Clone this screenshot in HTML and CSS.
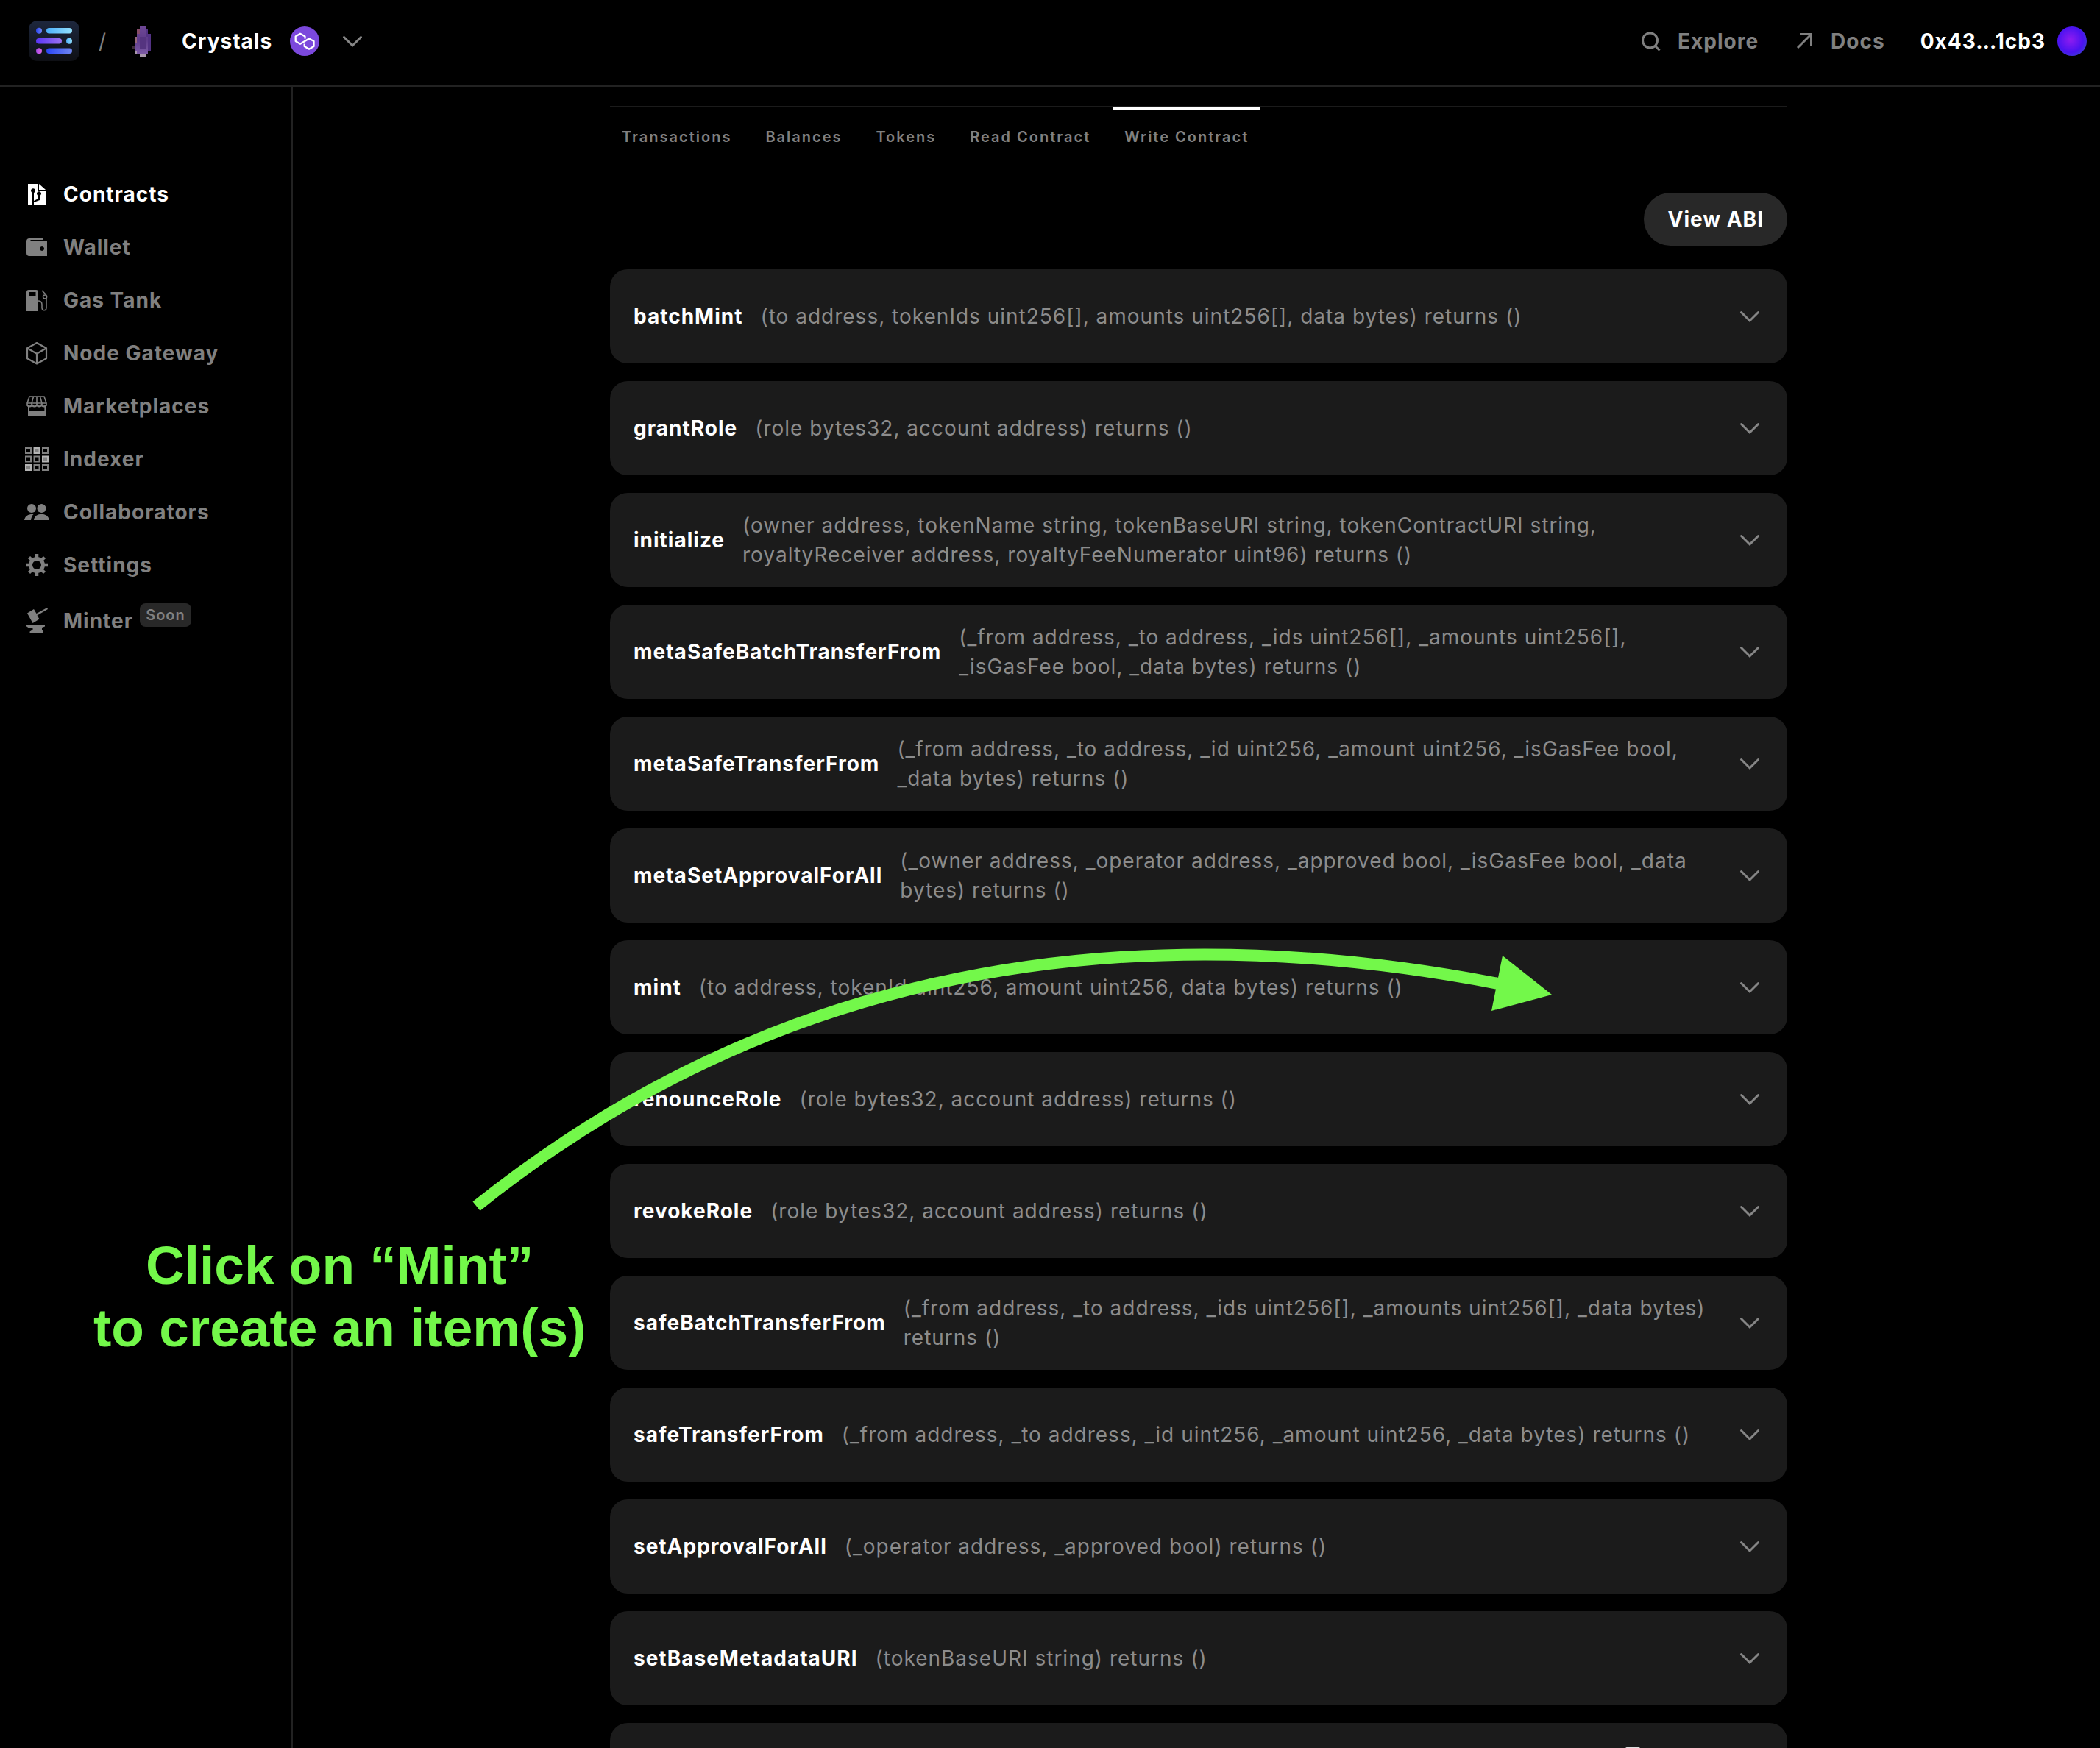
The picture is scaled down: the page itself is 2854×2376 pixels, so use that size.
FILE: index.html
```html
<!DOCTYPE html>
<html lang="en">
<head>
<meta charset="utf-8">
<meta name="viewport" content="width=device-width, initial-scale=1">
<title>Crystals</title>
<link rel="stylesheet" href="styles.css">
</head>
<body>
<svg class="defs" aria-hidden="true">
  <symbol id="chevron" viewBox="0 0 40 40"><path d="M9.500 14.500 21 26l11.500-11.500" fill="none" stroke="currentColor" stroke-width="3" stroke-linecap="round"/></symbol>
</svg>

<header class="topbar">
  <a class="logo" href="#" aria-label="Home">
    <svg width="70" height="56" viewBox="0 0 70 56">
      <defs>
        <linearGradient id="lg" x1="0" y1="0" x2="0" y2="1"><stop offset="0" stop-color="#1d273d"/><stop offset="1" stop-color="#0e0f14"/></linearGradient>
        <linearGradient id="c1"><stop offset="0" stop-color="#4db0fb"/><stop offset="1" stop-color="#93e0fd"/></linearGradient>
        <linearGradient id="c2"><stop offset="0" stop-color="#5a35f6"/><stop offset="1" stop-color="#9a72ef"/></linearGradient>
        <linearGradient id="c3"><stop offset="0" stop-color="#2a45f5"/><stop offset="1" stop-color="#6f86f0"/></linearGradient>
        <linearGradient id="c4"><stop offset="0" stop-color="#a647e6"/><stop offset="1" stop-color="#dd67e4"/></linearGradient>
      </defs>
      <rect x="1" width="69" height="55" rx="12" fill="url(#lg)"/>
      <circle cx="15" cy="13.800" r="4" fill="url(#c3)"/><rect x="25" y="10" width="35" height="7.500" rx="3.750" fill="url(#c1)"/>
      <rect x="11" y="24" width="35" height="7.500" rx="3.750" fill="url(#c2)"/><circle cx="56" cy="27.800" r="4" fill="url(#c1)"/>
      <circle cx="15" cy="41.200" r="4" fill="url(#c4)"/><rect x="25" y="37.500" width="35" height="7.500" rx="3.750" fill="url(#c3)"/>
    </svg>
  </a>
  <span class="slash">/</span>
  <button class="project" type="button">
    <svg class="crystal" width="26" height="42" viewBox="0 0 7 11" preserveAspectRatio="none" shape-rendering="crispEdges">
      <defs><linearGradient id="gem" x1="0" y1="0" x2="0" y2="1"><stop offset="0" stop-color="#6f4896"/><stop offset=".5" stop-color="#5e3b8a"/><stop offset="1" stop-color="#7c5aa5"/></linearGradient></defs>
      <path d="M3 0h2v1h1v2h1v6H6v1H1V4h1V1h1z" fill="url(#gem)"/>
      <path d="M3 4h2v4H3z" fill="#553480"/>
      <path d="M5 1h1v2h1v6H6V4H5z" fill="#533284"/>
      <path d="M2 1h1v2H2z" fill="#864c69"/><path d="M1 4h1v2H1z" fill="#966878"/>
      <path d="M0 7h1v1H0z" fill="#3c2a38"/><path d="M1 9h1v1H1zM3 10h2v1H3z" fill="#a897ac"/>
    </svg>
    <span>Crystals</span>
    <svg class="chain" width="40" height="40" viewBox="0 0 40 40"><circle cx="20" cy="20" r="20" fill="#7b48dc"/><path d="M20.500 16.500V13.500L14 9.800 7.700 13.500V20L14 23.700 26 16.400 32.500 20V27L26 30.700 19.700 27V23.500" fill="none" stroke="#fff" stroke-width="2.300" stroke-linejoin="round"/></svg>
    <svg class="icon40"><use href="#chevron"/></svg>
  </button>
  <nav class="toplinks" aria-label="Top">
    <a href="#"><svg width="30" height="28" viewBox="-2 0 30 28" fill="none" stroke="currentColor" stroke-width="3"><circle cx="10.500" cy="13" r="10"/><path d="M17.500 20.500l6 6"/></svg>Explore</a>
    <a href="#"><svg width="30" height="28" viewBox="-2 0 30 28" fill="none" stroke="currentColor" stroke-width="3"><path d="M3 23 21 5M6 4.500h15.500V20"/></svg>Docs</a>
    <a class="account" href="#">0x43…1cb3<span class="avatar"></span></a>
  </nav>
</header>

<div class="body">
  <nav class="sidebar" aria-label="Project">
    <a class="active" href="#"><svg viewBox="0 0 36 36"><path fill="currentColor" d="M6 4h13v10h11v18H14v-3l8-3v-6a3 3 0 1 0-2 0v4l-6 3V16a3 3 0 1 0-2 0v16H6zM21 4l9 8h-9z"/></svg>Contracts</a>
    <a href="#"><svg viewBox="0 0 36 36"><path fill="currentColor" fill-rule="evenodd" d="M8 6h19v2H9.500v2H32v20H8a4 4 0 0 1-4-4V10a4 4 0 0 1 4-4zM25 17a3 3 0 1 0 .1 0z"/></svg>Wallet</a>
    <a href="#"><svg viewBox="0 0 36 36"><path fill="currentColor" fill-rule="evenodd" d="M7 4h10a3 3 0 0 1 3 3v26H4V7a3 3 0 0 1 3-3zM7.500 7v6h9V7z"/><path d="M20 19c4 0 5 2 5 5v4c0 5 6 5 6 0V12c0-2-3-4-6-7m4 6a2.500 2.500 0 1 0 .1 5 2.500 2.500 0 0 0 0-5" fill="none" stroke="currentColor" stroke-width="1.500"/></svg>Gas Tank</a>
    <a href="#"><svg viewBox="0 0 36 36"><path fill="none" stroke="currentColor" stroke-width="2.200" stroke-linejoin="round" d="M18 4l13 7.200v14L18 32.500 5 25.200v-14zM5 11.200l13 7.500 13-7.500M18 18.700v13.800"/></svg>Node Gateway</a>
    <a href="#"><svg viewBox="0 0 36 36"><path fill="none" stroke="currentColor" stroke-width="1.600" d="M8 5h20l3 9v3H5v-3zM13.500 5 11 14v3M18 5v12M22.500 5l2.500 9v3M5 14h26M5 15c0 5 6.500 5 6.500 0 0 5 6.500 5 6.500 0 0 5 6.500 5 6.500 0 0 5 6.500 5 6.500 0M6.800 18v12M29.200 18v12"/><path fill="currentColor" d="M6 25h24v6H6z"/></svg>Marketplaces</a>
    <a href="#"><svg viewBox="0 0 36 36"><g fill="none" stroke="currentColor" stroke-width="2"><path d="M3 3h7v7H3zM26 3h7v7h-7zM3 14.500h7v7H3zM14.500 14.500h7v7h-7zM14.500 26h7v7h-7zM26 26h7v7h-7z"/><path class="lit" d="M14.500 3h7v7h-7zM26 14.500h7v7h-7zM3 26h7v7H3z"/></g></svg>Indexer</a>
    <a href="#"><svg viewBox="0 0 36 36"><g fill="currentColor"><circle cx="11" cy="13" r="6"/><circle cx="24.500" cy="13" r="6"/><path d="M1 29c1-6 6-8.500 12.500-8-2 2-3 4.500-3.500 8zM14 29c1-11 19.500-11 21 0z"/></g></svg>Collaborators</a>
    <a href="#"><svg viewBox="0 0 36 36"><g fill="none" stroke="currentColor"><circle cx="18" cy="18" r="8.500" stroke-width="5"/><path stroke-width="4.500" d="M18 3v6M18 27v6M3 18h6M27 18h6M7.500 7.500l4 4M24.500 24.500l4 4M7.500 28.500l4-4M24.500 11.500l4-4"/></g></svg>Settings</a>
    <a class="minter" href="#"><svg viewBox="0 0 36 36"><path fill="currentColor" d="M5 7.500 14 2l3.500 6L32 0l1 2-14.500 8.500 3 5L12.500 21zM2.500 23.500H29v2l-4 1.500v3l2 2.500v2H8.500v-2l4-2.500v-2c-5 0-8-1.500-10-4.500z"/></svg>Minter<span class="badge">Soon</span></a>
  </nav>

  <main class="content">
    <div class="panel">
      <nav class="tabs" aria-label="Contract">
        <a href="#">Transactions</a>
        <a href="#">Balances</a>
        <a href="#">Tokens</a>
        <a href="#">Read Contract</a>
        <a class="current" href="#">Write Contract</a>
      </nav>
      <button class="abi" type="button">View ABI</button>
      <div class="methods">
        <button class="method" type="button"><strong>batchMint</strong><span>(to address, tokenIds uint256[], amounts uint256[], data bytes) returns ()</span><svg class="icon40"><use href="#chevron"/></svg></button>
        <button class="method" type="button"><strong>grantRole</strong><span>(role bytes32, account address) returns ()</span><svg class="icon40"><use href="#chevron"/></svg></button>
        <button class="method" type="button"><strong>initialize</strong><span>(owner address, tokenName string, tokenBaseURI string, tokenContractURI string, royaltyReceiver address, royaltyFeeNumerator uint96) returns ()</span><svg class="icon40"><use href="#chevron"/></svg></button>
        <button class="method" type="button"><strong>metaSafeBatchTransferFrom</strong><span>(_from address, _to address, _ids uint256[], _amounts uint256[], _isGasFee bool, _data bytes) returns ()</span><svg class="icon40"><use href="#chevron"/></svg></button>
        <button class="method" type="button"><strong>metaSafeTransferFrom</strong><span>(_from address, _to address, _id uint256, _amount uint256, _isGasFee bool, _data bytes) returns ()</span><svg class="icon40"><use href="#chevron"/></svg></button>
        <button class="method" type="button"><strong>metaSetApprovalForAll</strong><span>(_owner address, _operator address, _approved bool, _isGasFee bool, _data bytes) returns ()</span><svg class="icon40"><use href="#chevron"/></svg></button>
        <button class="method" type="button"><strong>mint</strong><span>(to address, tokenId uint256, amount uint256, data bytes) returns ()</span><svg class="icon40"><use href="#chevron"/></svg></button>
        <button class="method" type="button"><strong>renounceRole</strong><span>(role bytes32, account address) returns ()</span><svg class="icon40"><use href="#chevron"/></svg></button>
        <button class="method" type="button"><strong>revokeRole</strong><span>(role bytes32, account address) returns ()</span><svg class="icon40"><use href="#chevron"/></svg></button>
        <button class="method" type="button"><strong>safeBatchTransferFrom</strong><span>(_from address, _to address, _ids uint256[], _amounts uint256[], _data bytes) returns ()</span><svg class="icon40"><use href="#chevron"/></svg></button>
        <button class="method" type="button"><strong>safeTransferFrom</strong><span>(_from address, _to address, _id uint256, _amount uint256, _data bytes) returns ()</span><svg class="icon40"><use href="#chevron"/></svg></button>
        <button class="method" type="button"><strong>setApprovalForAll</strong><span>(_operator address, _approved bool) returns ()</span><svg class="icon40"><use href="#chevron"/></svg></button>
        <button class="method" type="button"><strong>setBaseMetadataURI</strong><span>(tokenBaseURI string) returns ()</span><svg class="icon40"><use href="#chevron"/></svg></button>
        <div class="method next"><i class="handle"></i></div>
      </div>
    </div>
  </main>
</div>

<svg class="arrow" width="1480" height="380" viewBox="640 1280 1480 380" aria-hidden="true">
  <path d="M647.500 1639.500Q1220 1181 2036 1337" fill="none" stroke="#73f84a" stroke-width="16"/>
  <path d="M2042 1299l67 53-82 22z" fill="#73f84a"/>
</svg>
<p class="note">Click on “Mint”<br>to create an item(s)</p>
</body>
</html>
```

FILE: styles.css
```css
* { box-sizing: border-box; }

body {
  margin: 0;
  height: 100vh;
  display: flex;
  flex-direction: column;
  position: relative;
  overflow: hidden;
  background: #000;
  color: #fff;
  font: 700 28px/40px Inter, "Liberation Sans", sans-serif;
  letter-spacing: 1px;
}

a { color: inherit; text-decoration: none; }

button {
  border: 0;
  padding: 0;
  background: none;
  color: inherit;
  font: inherit;
  letter-spacing: inherit;
  text-align: left;
  cursor: pointer;
}

svg { display: block; flex: none; }
.defs { position: absolute; width: 0; height: 0; }
.icon40 { width: 40px; height: 40px; color: #868686; }

/* Top bar */
.topbar {
  display: flex;
  align-items: center;
  height: 118px;
  flex: none;
  padding: 0 18px 4px 38px;
  border-bottom: 2px solid #222;
}

.slash { margin: 0 34px 0 26px; color: #808080; font-weight: 400; }
.project { display: flex; align-items: center; }
.crystal { margin-right: 42px; }
.chain { margin: 0 24px; }

.toplinks { display: flex; gap: 48px; margin-left: auto; color: #808080; }
.toplinks a { display: flex; align-items: center; gap: 20px; }
.toplinks .account { color: #fff; gap: 16px; }

.avatar {
  width: 40px;
  height: 40px;
  border-radius: 50%;
  background: radial-gradient(circle at 45% 45%, #8f1cf0, #4a12f0 55%, #3060b0);
}

.body { display: flex; flex: 1; min-height: 0; }

/* Sidebar */
.sidebar {
  width: 398px;
  flex: none;
  display: flex;
  flex-direction: column;
  gap: 32px;
  padding: 126px 32px 0;
  border-right: 2px solid #222;
  color: #808080;
}

.sidebar a { display: flex; align-items: center; gap: 18px; }
.sidebar svg { width: 36px; height: 36px; }
.sidebar .active { color: #fff; }
.sidebar .minter { height: 48px; }
.lit { fill: #808080; stroke: #b4b4b4; }

.badge {
  align-self: flex-start;
  margin-left: -9px;
  padding: 0 8px;
  border-radius: 8px;
  background: #282828;
  font-size: 20px;
  font-weight: 600;
  line-height: 32px;
}

/* Contract methods */
.content {
  flex: 1;
  padding: 26px 0 0 6px;
  overflow-y: auto;
  scrollbar-width: none;
}

.panel {
  display: flex;
  flex-direction: column;
  max-width: 1600px;
  margin: 0 auto;
}

.tabs {
  display: flex;
  gap: 14px;
  border-top: 2px solid #1b1b1b;
  color: #808080;
  font-size: 20px;
  font-weight: 600;
  line-height: 32px;
  letter-spacing: 2px;
}

.tabs a { padding: 20px 16px 24px; border-top: 4px solid transparent; }
.tabs .current { border-color: #fff; }

.abi {
  align-self: flex-end;
  height: 72px;
  margin: 36px 0 32px;
  padding: 0 32px;
  border-radius: 36px;
  background: #282828;
}

.methods { display: flex; flex-direction: column; gap: 24px; }

.method {
  display: flex;
  align-items: center;
  gap: 24px;
  width: 100%;
  min-height: 128px;
  padding: 24px 32px;
  border-radius: 24px;
  background: #1b1b1b;
}

.method strong { font-weight: 700; }
.method span { flex: 1; color: #8c8c8c; font-weight: 400; }

.next { align-items: flex-start; justify-content: flex-end; padding: 33px 200px 0; }
.handle { width: 20px; height: 4px; border-radius: 2px 2px 0 0; background: #ddd; }

/* Annotation over the page */
.arrow { position: absolute; left: 640px; top: 1280px; pointer-events: none; }

.note {
  position: absolute;
  left: 127px;
  top: 1677px;
  margin: 0;
  color: #73f84a;
  font: 700 73px/85px "Liberation Sans", Arial, sans-serif;
  letter-spacing: 0;
  text-align: center;
  white-space: nowrap;
}
```
